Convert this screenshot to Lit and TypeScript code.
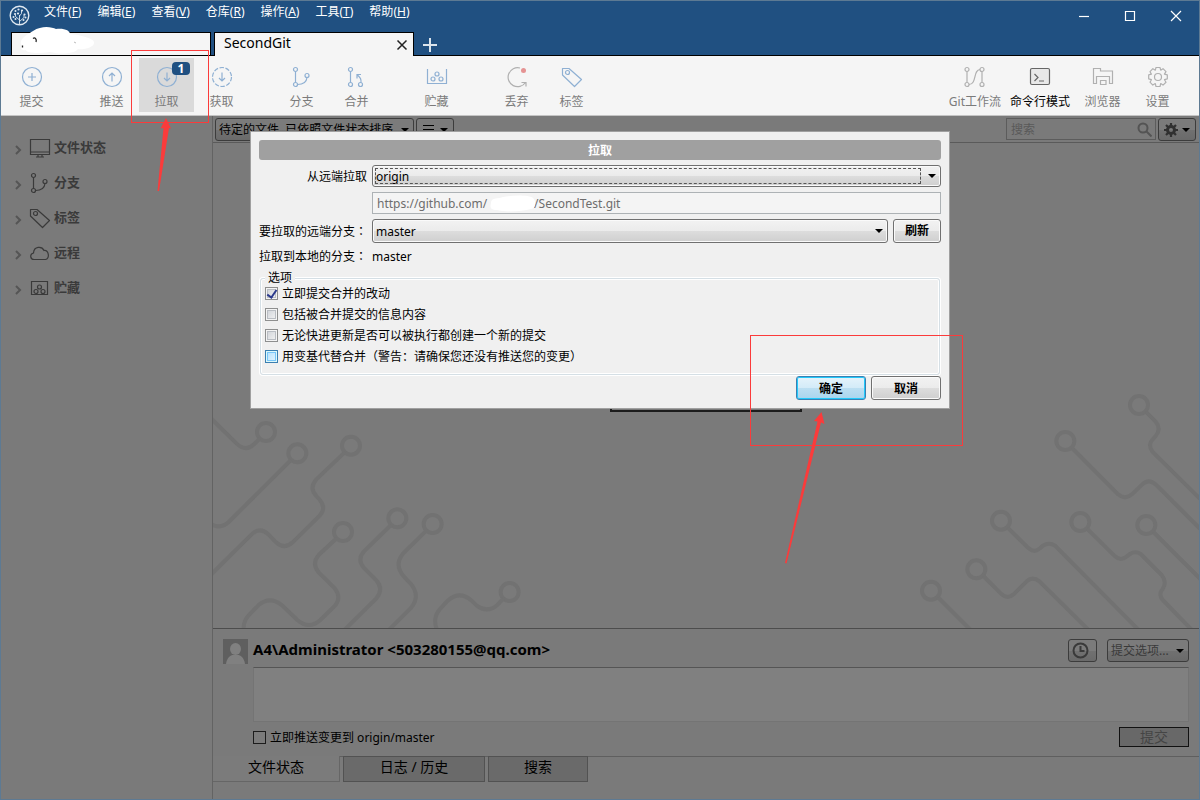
import { LitElement, html, svg, css } from "lit";
import { customElement, state } from "lit/decorators.js";
import { classMap } from "lit/directives/class-map.js";

const icons: Record<string, unknown> = {
  commit: svg`<circle cx="12" cy="12" r="9.5"/><path d="M12 8v8M8 12h8"/>`,
  push: svg`<circle cx="12" cy="12" r="9.5"/><path d="M12 16.5V8M9 11l3-3 3 3"/>`,
  pull: svg`<circle cx="12" cy="12" r="9.5"/><path d="M12 7.5V16M9 13l3 3 3-3"/>`,
  fetch: svg`<circle cx="12" cy="12" r="9.5" stroke-dasharray="4.4 1.6"/><path d="M12 7.5V16M9 13l3 3 3-3"/>`,
  branch: svg`<circle cx="5.500" cy="4.500" r="2"/><circle cx="5.500" cy="19.500" r="2"/><circle cx="17" cy="10.500" r="2"/><path d="M5.500 6.500v11M7.500 19.500c5 0 9-2 9.500-7"/>`,
  merge: svg`<circle cx="5.500" cy="4.500" r="2"/><circle cx="5.500" cy="19.500" r="2"/><circle cx="15.500" cy="19.500" r="2"/><path d="M5.500 6.500v11M16 17.500c.5-3-.5-5-3.500-7.500M12 13.500v-4h4"/>`,
  stash: svg`<path d="M2.500 4v14.500h19V4"/><circle cx="12" cy="9" r="2"/><circle cx="8" cy="14" r="2"/><circle cx="16" cy="14" r="2"/>`,
  discard: svg`<path d="M15 3a9.500 9.500 0 1 0 5.500 14.500M16.500 17.500h4.500v4"/><circle cx="18.500" cy="5.500" r="2.500" fill="#e59393" stroke="none"/>`,
  tag: svg`<path d="M2.500 3.500h6.500l12.500 11-7 7L2.500 10z" stroke-linejoin="round"/><circle cx="7.500" cy="7.500" r="2"/>`,
  flow: svg`<circle cx="4" cy="4.500" r="2"/><circle cx="4" cy="19.500" r="2"/><circle cx="19" cy="4.500" r="2"/><circle cx="19" cy="19.500" r="2"/><path d="M4 6.500v11M19 6.500v11M6 19.500c8 0 4-15 11-15"/>`,
  terminal: svg`<rect x="2.500" y="3.500" width="19" height="16" rx="1.500" fill="#e8e8e8"/><path d="M6.500 9l3.500 3.500-3.500 3.500M11 16h5"/>`,
  explorer: svg`<path d="M2.500 18.500v-15h7v2.500h12v12.500h-3v-7h-13v7zM9.500 19.500v-4h5.500v4z"/>`,
  gear: svg`<path d="M10 2.500h4l.7 2.700 2.300-1.500 3 3-1.600 2.400 2.900.8v4l-2.800.8 1.500 2.500-3 2.900-2.300-1.500-.7 2.900h-4l-.7-2.900-2.500 1.500-2.800-2.900 1.400-2.500-2.700-.8v-4l2.700-.8-1.400-2.400 2.900-3 2.400 1.500z" stroke-linejoin="round"/><circle cx="12" cy="12" r="3.500"/>`,
  monitor: svg`<path d="M2.500 3.500h19v15h-19zM2.500 16h19M10 18.500v2.500M14 18.500v2.500M8 21h8"/>`,
  cloud: svg`<path d="M6 18.500c-4 0-4.500-5.500-.5-6.500C6 5 14 5 16 9.500c5-.5 6 8.500 1.500 9z"/>`,
  stashBox: svg`<path d="M3.500 5.500h16v13h-16z"/><circle cx="11.500" cy="11" r="2"/><circle cx="8" cy="15.500" r="2"/><circle cx="15" cy="15.500" r="2"/>`,
};

const icon = (name: string) =>
  html`<svg class="icon" viewBox="0 0 24 24" aria-hidden="true">${icons[name]}</svg>`;

interface Tool { icon: string; label: string; tone?: string; badge?: number }

const toolGroups: Tool[][] = [
  [{ icon: "commit", label: "提交" }],
  [
    { icon: "push", label: "推送" },
    { icon: "pull", label: "拉取", badge: 1 },
    { icon: "fetch", label: "获取" },
  ],
  [{ icon: "branch", label: "分支" }, { icon: "merge", label: "合并" }],
  [{ icon: "stash", label: "贮藏" }],
  [{ icon: "discard", label: "丢弃", tone: "grey" }, { icon: "tag", label: "标签" }],
];

const sideTools: Tool[] = [
  { icon: "flow", label: "Git工作流", tone: "grey" },
  { icon: "terminal", label: "命令行模式", tone: "dark" },
  { icon: "explorer", label: "浏览器", tone: "grey" },
  { icon: "gear", label: "设置", tone: "grey" },
];

const menus: [string, string][] = [
  ["文件", "F"], ["编辑", "E"], ["查看", "V"], ["仓库", "R"],
  ["操作", "A"], ["工具", "T"], ["帮助", "H"],
];

const sections: [string, string][] = [
  ["monitor", "文件状态"], ["branch", "分支"], ["tag", "标签"],
  ["cloud", "远程"], ["stashBox", "贮藏"],
];

const base = css`
  * { box-sizing: border-box; }
  button, select, input, textarea {
    font: inherit; color: inherit; margin: 0; border-radius: 0; appearance: none;
  }
  .icon { width: 24px; height: 24px; fill: none; stroke: currentColor; stroke-width: 1.2; flex: none; display: block; }
  .pick { position: relative; display: flex; min-width: 0; }
  .pick select { width: 100%; outline: none; }
  .pick::after {
    content: ""; position: absolute; right: 5px; top: 50%; margin-top: -2px;
    border: 4px solid transparent; border-top-color: #000; border-bottom: 0; pointer-events: none;
  }
`;

@customElement("app-titlebar")
export class AppTitlebar extends LitElement {
  static styles = [base, css`
    :host { display: block; background: #205081; color: #fff; }
    .top { display: flex; height: 31px; padding-left: 8px; }
    .logo { width: 21px; height: 21px; margin: 4px 14px 0 0; }
    .menu { display: flex; gap: 16px; flex: 1; }
    .menu button { border: 0; background: none; padding: 0; height: 22px; line-height: 22px; white-space: nowrap; }
    .window { display: flex; height: 29px; }
    .window button { width: 46px; border: 0; padding: 0; background: none; display: grid; place-items: center; }
    .window svg { width: 12px; height: 12px; fill: none; stroke: #fff; stroke-width: 1.200; }
    .tabs { display: flex; gap: 3px; padding-left: 10px; height: 24px; border-bottom: 1px solid #000; }
    .tab {
      position: relative; width: 200px; height: 24px; background: #f5f5f5; color: #000; border: 1px solid #000;
      border-bottom: 0; display: flex; align-items: flex-start; padding: 0 5px 0 9px; font-size: 14px; line-height: 20px;
    }
    .tab.idle { height: 23px; }
    .tab span { flex: 1; }
    .tab button { border: 0; background: none; padding: 0; margin-top: 6px; width: 12px; height: 12px; }
    .tab button svg { width: 12px; height: 12px; stroke: #222; stroke-width: 1.500; display: block; }
    .cover { position: absolute; left: 6px; top: -7px; width: 80px; height: 30px; }
    .add { width: 16px; height: 24px; margin-left: 5px; border: 0; padding: 0; background: none; }
    .add svg { width: 16px; height: 16px; stroke: #dbe4ec; stroke-width: 2; display: block; margin-top: 1px; }
  `];

  render() {
    return html`
      <div class="top">
        <svg class="logo" viewBox="0 0 21 21" fill="none" stroke="#dfe8f0">
          <circle cx="10.500" cy="10.500" r="9.300" stroke-width="1.400"/>
          <path d="M10.500 19v-9M10.500 15l-4-3.500V9.500M10.500 16.500l4.500-4V10M10.500 11l2-2.500V6" stroke-width=".9"/>
          <g fill="#dfe8f0" stroke="none"><circle cx="9.500" cy="4.500" r="1.100"/><circle cx="9" cy="8.500" r="1.100"/><circle cx="6" cy="9" r="1.100"/><circle cx="15.500" cy="9.500" r="1.100"/><circle cx="13" cy="5.500" r="1.100"/><circle cx="6.500" cy="6" r="1"/><circle cx="4.500" cy="12" r="1"/><circle cx="16.500" cy="12.500" r="1"/><circle cx="6.500" cy="14" r="1"/><circle cx="14.500" cy="15" r="1"/></g>
        </svg>
        <nav class="menu">
          ${menus.map(([name, key]) => html`<button>${name}(<u>${key}</u>)</button>`)}
        </nav>
        <div class="window">
          <button aria-label="最小化"><svg viewBox="0 0 12 12"><path d="M1 6.500h10"/></svg></button>
          <button aria-label="最大化"><svg viewBox="0 0 12 12"><path d="M1.500 1.500h9v9h-9z"/></svg></button>
          <button aria-label="关闭"><svg viewBox="0 0 12 12"><path d="M1 1l10 10M11 1L1 11"/></svg></button>
        </div>
      </div>
      <div class="tabs">
        <div class="tab idle">
          <svg class="cover" viewBox="0 0 80 30">
            <path d="M4 20C-1 14 10 8 15 5C24-1 34 1 38 3C47 2 52 5 52 8C62 9 75 12 76 16C77 21 66 24 60 23C55 29 38 28 32 26C20 28 8 27 8 24C3 25 2 22 4 20z" fill="#fff"/>
            <path d="M4.500 19.500v2M15 12.500c2-1.500 4 .5 3 3.500" fill="none" stroke="#222" stroke-width="1.300"/>
            <path d="M56 16l2 1" stroke="#bbb"/>
          </svg>
        </div>
        <div class="tab"><span>SecondGit</span>
          <button aria-label="关闭标签页"><svg viewBox="0 0 12 12"><path d="M1.500 1.500l9 9M10.500 1.500l-9 9"/></svg></button>
        </div>
        <button class="add" aria-label="新标签页"><svg viewBox="0 0 16 16"><path d="M8 1v14M1 8h14"/></svg></button>
      </div>`;
  }
}

@customElement("app-toolbar")
export class AppToolbar extends LitElement {
  static styles = [base, css`
    :host { display: flex; justify-content: space-between; background: #f5f5f5; border-bottom: 1px solid #c4c4c4; height: 60px; padding: 2px 14px 0 3px; }
    .groups { display: flex; gap: 25px; }
    .group { display: flex; }
    .tool {
      position: relative; display: flex; flex-direction: column; align-items: center; gap: 4px;
      min-width: 55px; height: 54px; padding: 7px 4px 0; border: 0; background: none;
      color: #8fb0d3; line-height: 18px; white-space: nowrap;
    }
    .tool span { color: #7b7b7b; }
    .grey { color: #b0b0b0; }
    .dark { color: #666; padding: 7px 5px 0; }
    .dark span { color: #000; }
    .active { background: #dadada; }
    .badge {
      position: absolute; left: 33px; top: 4px; width: 18px; height: 13px; border-radius: 4px;
      background: #205081; font-size: 12px; line-height: 13px; font-weight: 700; font-style: normal; color: #fff; text-align: center;
    }
  `];

  private tool(t: Tool) {
    return html`<button class=${classMap({ tool: true, active: !!t.badge, grey: t.tone === "grey", dark: t.tone === "dark" })}>
      ${icon(t.icon)}<span>${t.label}</span>${t.badge ? html`<i class="badge">${t.badge}</i>` : ""}
    </button>`;
  }

  render() {
    return html`
      <div class="groups">${toolGroups.map((g) => html`<div class="group">${g.map((t) => this.tool(t))}</div>`)}</div>
      <div class="group">${sideTools.map((t) => this.tool(t))}</div>`;
  }
}

@customElement("app-sidebar")
export class AppSidebar extends LitElement {
  static styles = [base, css`
    :host { display: block; padding-top: 14px; border-right: 1px solid #636363; }
    .row {
      display: flex; align-items: center; height: 35px; width: 100%; padding: 0 0 0 13px; border: 0; background: none;
      color: #3a3a3a; font-size: 13px; line-height: 20px; font-weight: 700; text-align: left;
    }
    .row span { padding-bottom: 2px; }
    .chevron { width: 8px; height: 10px; margin: 4px 6px 0 0; fill: none; stroke: #555; stroke-width: 2; }
    .row .icon { margin-right: 2px; stroke-width: 1.2; }
  `];

  render() {
    return sections.map(([name, label]) => html`<button class="row">
      <svg class="chevron" viewBox="0 0 8 10"><path d="M2 1l4 4-4 4"/></svg>${icon(name)}<span>${label}</span>
    </button>`);
  }
}

@customElement("app-workspace")
export class AppWorkspace extends LitElement {
  static styles = [base, css`
    :host { display: flex; flex-direction: column; min-width: 0; }
    .filters { display: flex; gap: 2px; height: 27px; padding: 2px 3px 0 2px; border-bottom: 1px solid #5a5a5a; }
    .filters select, .filters button, .commit-head button, .commit-head select {
      height: 23px; border: 1px solid #3c3c3c; border-radius: 3px; background: linear-gradient(#7b7b7b 50%, #717171 50%, #6a6a6a);
    }
    .sort { width: 199px; }
    .sort select { padding: 0 16px 0 3px; color: #000; }
    .spacer { flex: 1; }
    .glyph { width: 38px; padding: 0 5px; display: flex; align-items: center; justify-content: space-between; }
    .glyph svg { width: 14px; height: 14px; fill: none; stroke: #000; }
    .glyph::after { content: ""; border: 4px solid transparent; border-top-color: #000; border-bottom: 0; }
    .search { display: flex; align-items: center; width: 150px; height: 22px; border: 1px solid #5c5c5c; padding: 0 3px; }
    .search input { flex: 1; min-width: 0; border: 0; background: none; padding: 0 1px; outline: none; }
    .search input::placeholder { color: #595959; opacity: 1; }
    .search svg { width: 15px; height: 15px; fill: none; stroke: #545454; stroke-width: 2; }
    .canvas { flex: 1; min-height: 250px; display: flex; align-items: flex-end; justify-content: space-between; overflow: hidden; border-bottom: 1px solid #4d4d4d; }
    .traces { fill: none; stroke: #727272; stroke-width: 12; flex: none; display: block; width: 397px; }
    .left { height: 228px; }
    .right { height: 248px; }
    .notice { width: 196px; height: 52px; border: 2px solid #1c1c1c; align-self: center; }
    .commit { display: grid; grid-template-columns: 25px 1fr; column-gap: 5px; padding: 10px 10px 9px; border-bottom: 1px solid #5f5f5f; }
    .avatar { width: 25px; height: 25px; background: #5f5f5f; display: block; }
    .commit-head { display: flex; align-items: flex-start; gap: 10px; height: 28px; }
    .who { flex: 1; font-size: 15px; line-height: 20px; font-weight: 700; }
    .commit-head .clock { width: 29px; padding: 0; display: grid; place-items: center start; padding-left: 3px; }
    .clock svg { width: 17px; height: 17px; fill: none; stroke: #3a3a3a; stroke-width: 2; display: block; }
    .options { width: 82px; color: #3a3a3a; }
    .options select { padding: 0 14px 0 3px; }
    .message { grid-column: 2; width: 100%; height: 55px; border: 1px solid #747474; border-top-color: #555; background: #808080; resize: none; display: block; outline: none; }
    .commit-foot { grid-column: 2; display: flex; justify-content: space-between; padding-top: 5px; }
    .check { display: flex; align-items: center; gap: 4px; height: 20px; }
    .check input { width: 13px; height: 13px; border: 1px solid #1c1c1c; background: #7b7b7b; }
    .submit { width: 70px; height: 20px; padding: 0; border: 1px solid #111; background: #686868; color: #454545; font-size: 14px; line-height: 18px; }
    .views { display: flex; gap: 3px; height: 43px; margin-top: -1px; align-items: flex-start; }
    .views button { height: 26px; padding: 0 0 4px; border: 1px solid #525252; background: #6a6a6a; font-size: 14px; line-height: 20px; }
    .views .current { width: 127px; background: #7b7b7b; border-color: #666; border-width: 0 1px 1px 0; }
    .history { width: 142px; }
    .find { width: 100px; }
  `];

  render() {
    return html`
      <div class="filters">
        <div class="pick sort"><select aria-label="文件排序"><option>待定的文件, 已依照文件状态排序</option></select></div>
        <button class="glyph" aria-label="列表视图"><svg viewBox="0 0 14 14"><path d="M1 2.500h11M1 6.500h11M1 10.500h11" stroke-width="1"/></svg></button>
        <span class="spacer"></span>
        <label class="search"><input placeholder="搜索" aria-label="搜索">
          <svg viewBox="0 0 15 15"><circle cx="6" cy="6" r="4.500"/><path d="M9.500 9.500l5 5"/></svg></label>
        <button class="glyph" aria-label="筛选设置"><svg viewBox="0 0 14 14"><circle cx="7" cy="7" r="3.500" stroke="#303030" stroke-width="3"/><path d="M7 0v3M7 11v3M0 7h3M11 7h3M2 2l2 2M10 10l2 2M2 12l2-2M10 4l2-2" stroke="#303030" stroke-width="2.200"/></svg></button>
      </div>
      <div class="canvas">
        <svg class="traces left" viewBox="9 0 1191 684">
          <circle cx="168" cy="96" r="27"/><circle cx="262" cy="160" r="27"/><circle cx="423" cy="137" r="27"/>
          <circle cx="399" cy="396" r="27"/><circle cx="562" cy="355" r="27"/><circle cx="668" cy="372" r="27"/><circle cx="899" cy="576" r="27"/>
          <path d="M5 57L80 131Q107 157 133 132L149 116M5 373Q32 388 56 366L243 180M5 522L124 404Q150 378 176 404L198 427Q223 450 248 427L329 347Q350 324 329 299L319 288Q296 264 319 238L404 157"/>
          <path d="M101 690Q99 664 116 646L145 616Q180 586 216 616L262 660Q297 690 331 660L375 617Q395 592 375 566L326 517Q304 491 326 465L380 415"/>
          <path d="M405 688L499 595Q522 567 499 541L462 504Q440 478 462 454L543 375M538 688L603 624Q632 588 603 552L582 530Q551 495 579 461L649 392M681 690Q667 654 689 628L713 602Q749 570 785 602L799 616Q832 641 862 615L880 596"/>
        </svg>
        <div class="notice"></div>
        <svg class="traces right" viewBox="-174 0 1191 744">
          <circle cx="837" cy="75" r="27"/><circle cx="616" cy="183" r="27"/><circle cx="423" cy="422" r="27"/><circle cx="661" cy="426" r="27"/>
          <circle cx="859" cy="435" r="27"/><circle cx="349" cy="568" r="27"/><circle cx="213" cy="632" r="27"/>
          <path d="M857 95L887 125Q905 146 887 168L878 178Q862 194 878 216L1022 358M636 204L774 343Q795 361 816 343L846 314Q866 294 888 314L1022 448"/>
          <path d="M443 443L506 505Q523 520 540 505L549 497Q567 485 585 497L834 748M681 446L765 529Q783 545 801 529L810 522Q826 512 842 522L905 585Q922 606 908 627Q894 642 908 660L994 748M880 456L1022 598"/>
          <path d="M370 588L425 643Q443 659 461 643L500 604Q518 588 538 604L684 748M234 652L330 748"/>
        </svg>
      </div>
      <form class="commit" @submit=${(e: Event) => e.preventDefault()}>
        <svg class="avatar" viewBox="0 0 25 25" fill="#808080"><ellipse cx="12.500" cy="10" rx="5.500" ry="6"/><path d="M3 25c1-7 5-9 7-9h5c2 0 6 2 7 9z"/></svg>
        <div class="commit-head">
          <span class="who">A4\\Administrator &lt;503280155@qq.com&gt;</span>
          <button type="button" class="clock" aria-label="提交历史"><svg viewBox="0 0 17 17"><circle cx="8.500" cy="8.500" r="7"/><path d="M8.500 4v5h4"/></svg></button>
          <div class="pick options"><select aria-label="提交选项"><option>提交选项...</option></select></div>
        </div>
        <textarea class="message" aria-label="提交信息"></textarea>
        <div class="commit-foot">
          <label class="check"><input type="checkbox">立即推送变更到 origin/master</label>
          <button class="submit">提交</button>
        </div>
      </form>
      <div class="views"><button class="current">文件状态</button><button class="history">日志 / 历史</button><button class="find">搜索</button></div>`;
  }
}

@customElement("pull-dialog")
export class PullDialog extends LitElement {
  static styles = [base, css`
    :host { display: block; width: 700px; background: #f0f0f0; border: 1px solid #a0a0a0; padding: 8px; color: #000; }
    .title { margin: 0; height: 20px; border-radius: 3px; background: #a0a0a0; color: #fff; font-size: 12px; line-height: 22px; text-align: center; }
    .form { display: grid; grid-template-columns: 108px 1fr; gap: 5px; margin-top: 5px; align-items: center; line-height: 18px; white-space: nowrap; }
    .form > label { justify-self: end; padding-top: 1px; }
    .colon { font-family: "Noto Sans CJK TC", sans-serif; line-height: 1; }
    .form select, .push {
      border: 1px solid #707070; border-radius: 3px; box-shadow: inset 0 0 0 1px #fafafa;
      background: linear-gradient(#f2f2f2, #ebebeb 50%, #dddddd 50%, #cfcfcf);
    }
    .form select { height: 22px; padding: 1px 20px 0 3px; }
    .form .tall select { height: 24px; }
    .focus::before { content: ""; position: absolute; inset: 3px 20px 3px 3px; border: 1px dashed #555; pointer-events: none; }
    .pair { display: flex; gap: 5px; }
    .pair .pick { flex: 1; }
    .push { height: 24px; width: 70px; padding: 0; font-weight: 700; }
    .refresh { width: 48px; }
    .address { position: relative; }
    .address input { display: block; width: 100%; height: 22px; padding: 0 4px; border: 1px solid #adb2b5; background: #f4f4f4; color: #6d6d6d; white-space: pre; }
    .address svg { position: absolute; left: 117px; top: 3px; width: 48px; height: 18px; }
    .options { margin: 4px 1px 1px; padding: 0 4px 7px; border: 1px solid #d5dfe5; border-radius: 3px; box-shadow: 0 0 0 1px #fff, inset 0 0 0 1px #fff; }
    .options legend { padding: 0 3px; margin: 0; line-height: 16px; background: #f0f0f0; }
    .check { display: flex; align-items: center; gap: 4px; height: 21px; line-height: 16px; }
    .check:first-of-type { margin-top: -3px; }
    .check input { width: 13px; height: 13px; border: 1px solid #8e8f8f; box-shadow: inset 0 0 0 1px #f4f4f4, inset 0 0 0 2px #b9bdc3; background: linear-gradient(135deg, #cbcfd5, #f6f6f6); display: grid; place-items: center; }
    .check input:checked::after { content: ""; width: 4px; height: 8px; border: solid #2b3a8c; border-width: 0 2px 2px 0; transform: rotate(35deg); margin-top: -2px; }
    .check .hot { border-color: #3c7fb1; box-shadow: inset 0 0 0 1px #def9fa, inset 0 0 0 2px #79c6f9; background: linear-gradient(135deg, #b1dffd, #e9f7fe); }
    .actions { display: flex; justify-content: flex-end; gap: 5px; }
    .ok { border-color: #3c7fb1; box-shadow: inset 0 0 0 1px #21c9fb; background: linear-gradient(#e5f3fb, #d3ebf8 50%, #bcdff2 50%, #a9d5ee); }
  `];

  @state() private choices = [
    { label: "立即提交合并的改动", on: true, hot: false },
    { label: "包括被合并提交的信息内容", on: false, hot: false },
    { label: "无论快进更新是否可以被执行都创建一个新的提交", on: false, hot: false },
    { label: "用变基代替合并（警告：请确保您还没有推送您的变更）", on: false, hot: true },
  ];

  render() {
    return html`
      <h1 class="title">拉取</h1>
      <div class="form">
        <label for="remote">从远端拉取</label>
        <div class="pick focus"><select id="remote"><option>origin</option></select></div>
        <span></span>
        <div class="address"><input aria-label="远端地址" readonly .value=${"https://github.com/" + " ".repeat(15) + "/SecondTest.git"}>
          <svg viewBox="0 0 48 18"><path d="M2 8C2 2 10 4 14 2C24 0 40 0 44 3C48 7 46 14 42 14C32 17 14 17 8 15C1 15 1 12 2 8z" fill="#fff"/></svg>
        </div>
        <label for="branch">要拉取的远端分支<span class="colon">：</span></label>
        <div class="pair"><div class="pick tall"><select id="branch"><option>master</option></select></div><button class="push refresh">刷新</button></div>
        <span>拉取到本地的分支<span class="colon">：</span></span><span>master</span>
      </div>
      <fieldset class="options"><legend>选项</legend>
        ${this.choices.map((c) => html`<label class="check"><input type="checkbox" class=${classMap({ hot: c.hot })} .checked=${c.on}><span>${c.label}</span></label>`)}
      </fieldset>
      <div class="actions"><button class="push ok">确定</button><button class="push">取消</button></div>`;
  }
}

@customElement("app-root")
export class AppRoot extends LitElement {
  static styles = [base, css`
    :host {
      position: relative; display: flex; flex-direction: column; min-height: 100vh; box-sizing: border-box; overflow: hidden;
      border: 1px solid #5d7a93; background: #7a7a7a; color: #000;
      font-family: "Noto Sans", "Noto Sans CJK SC", sans-serif; font-size: 12px;
    }
    .main { flex: 1; display: grid; grid-template-columns: 212px 1fr; }
    .overlay { position: absolute; inset: 130px 0 auto; display: flex; justify-content: center; }
    .marks { position: absolute; left: -1px; top: -1px; width: 1200px; height: 800px; pointer-events: none; fill: none; stroke: #fb3b3b; }
    .arrow { fill: #fb3b3b; stroke: none; }
  `];

  render() {
    return html`
      <app-titlebar></app-titlebar>
      <app-toolbar></app-toolbar>
      <div class="main"><app-sidebar></app-sidebar><app-workspace></app-workspace></div>
      <div class="overlay"><pull-dialog role="dialog" aria-label="拉取"></pull-dialog></div>
      <svg class="marks" viewBox="0 0 1200 800" aria-hidden="true">
        <rect x="131.500" y="50.500" width="77" height="72"/>
        <rect x="750.500" y="335.500" width="212" height="110"/>
        <path class="arrow" d="M166 118L160.500 128.500L163.500 128L157.500 191L159 191L169 128L171 128.500z"/>
        <path class="arrow" d="M821.500 412L814 421L817.500 421.500L785 563L786.500 563.500L821 422.500L824.500 424z"/>
      </svg>`;
  }
}
